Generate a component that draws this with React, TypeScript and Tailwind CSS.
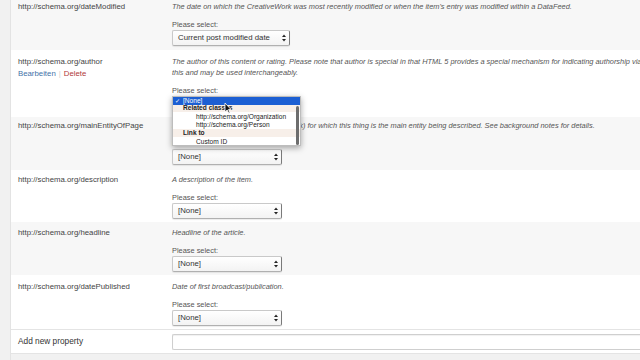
import React from "react";

const font = "font-['Liberation_Sans',Arial,sans-serif]";

function Arrows() {
  return (
    <svg width="4" height="8" viewBox="0 0 4 8" className="shrink-0">
      <path d="M0 3 L2 0.5 L4 3 Z" fill="#222" />
      <path d="M0 5 L2 7.5 L4 5 Z" fill="#222" />
    </svg>
  );
}

function Select({ value, width }: { value: string; width: string }) {
  return (
    <div
      className={`${width} h-[16px] flex items-center justify-between pl-[5px] pr-[3px] bg-gradient-to-b from-white to-[#f3f3f3] border border-[#c9c9c9] border-r-[#7a7a7a] border-b-[#b0b0b0] rounded-[2px] shadow-[0_1px_1px_rgba(0,0,0,0.08)]`}
    >
      <span className="text-[7.8px] text-[#333] leading-none">{value}</span>
      <Arrows />
    </div>
  );
}

type RowProps = {
  label: string;
  desc: string[];
  value: string;
  selWidth?: string;
  bg: string;
  h: string;
  pt?: string;
  actions?: boolean;
};

function Row({ label, desc, value, selWidth = "w-[110px]", bg, h, pt = "pt-[4px]", actions }: RowProps) {
  return (
    <div className={`flex ${bg} ${h} ${pt} overflow-hidden`}>
      <div className="w-[161px] shrink-0 pl-[7px]">
        <div className="text-[7.8px] leading-[11px] text-[#444] whitespace-nowrap">{label}</div>
        {actions && (
          <div className="text-[7.8px] leading-[11px] mt-[1px] whitespace-nowrap">
            <span className="text-[#3f72a8]">Bearbeiten</span>
            <span className="text-[#d0d0d0] mx-[3px]">|</span>
            <span className="text-[#b03a3a]">Delete</span>
          </div>
        )}
      </div>
      <div className="flex-1 min-w-0">
        {desc.map((d, i) => (
          <div key={i} className="text-[7.4px] leading-[11px] italic text-[#555] whitespace-nowrap">
            {d}
          </div>
        ))}
        <div className="text-[7.4px] leading-[11px] text-[#555] mt-[7px]">Please select:</div>
        <Select value={value} width={selWidth} />
      </div>
    </div>
  );
}

function Dropdown() {
  return (
    <div className="absolute left-[161px] top-[96px] w-[129px] h-[50px] bg-white border border-[#bdbdbd] shadow-[0_2px_6px_rgba(0,0,0,0.35)] overflow-hidden text-[6.6px] leading-none text-[#222]">
      <div className="h-[8px] bg-[#1c5fd3] text-white flex items-center pl-[2px]">
        <span className="w-[8px] text-[6px]">✓</span>
        <span>[None]</span>
      </div>
      <div className="h-[7px] bg-[#f7efe9] flex items-center pl-[10px] font-bold">Related classes</div>
      <div className="h-[10px] flex items-end pb-[1px] pl-[23px]">http://schema.org/Organization</div>
      <div className="h-[7px] flex items-center pl-[23px]">http://schema.org/Person</div>
      <div className="h-[8px] bg-[#f7efe9] flex items-center pl-[10px] font-bold">Link to</div>
      <div className="h-[10px] flex items-center pl-[23px]">Custom ID</div>
      <div className="absolute right-[1px] top-[9px] w-[3px] h-[39px] rounded-full bg-[#6d6d6d]" />
    </div>
  );
}

function Cursor() {
  return (
    <svg width="8" height="12" viewBox="0 0 8 12" className="absolute left-[213px] top-[102px]">
      <path d="M1 1 L1 10 L3.2 8 L4.8 11.2 L6 10.6 L4.5 7.5 L7 7.5 Z" fill="#111" stroke="#fff" strokeWidth="0.8" />
    </svg>
  );
}

export default function App() {
  return (
    <div className={`w-[640px] h-[360px] overflow-hidden bg-[#f1f1f1] flex ${font}`}>
      <div className="w-[11px] shrink-0 bg-[#f1f1f1] border-r border-[#e3e3e3]" />
      <div className="flex-1 relative">
        <Row
          label="http://schema.org/dateModified"
          desc={["The date on which the CreativeWork was most recently modified or when the item's entry was modified within a DataFeed."]}
          value="Current post modified date"
          selWidth="w-[118px]"
          bg="bg-[#f7f7f7]"
          h="h-[50px]"
          pt="pt-[1px]"
        />
        <Row
          label="http://schema.org/author"
          desc={[
            "The author of this content or rating. Please note that author is special in that HTML 5 provides a special mechanism for indicating authorship via the rel tag. That is equivalent to",
            "this and may be used interchangeably.",
          ]}
          value="[None]"
          bg="bg-white"
          h="h-[67px]"
          pt="pt-[6px]"
          actions
        />
        <Row
          label="http://schema.org/mainEntityOfPage"
          desc={["Indicates a page (or other CreativeWork) for which this thing is the main entity being described. See background notes for details."]}
          value="[None]"
          bg="bg-[#f7f7f7]"
          h="h-[53px]"
          pt="pt-[3px]"
        />
        <Row
          label="http://schema.org/description"
          desc={["A description of the item."]}
          value="[None]"
          bg="bg-white"
          h="h-[52px]"
        />
        <Row
          label="http://schema.org/headline"
          desc={["Headline of the article."]}
          value="[None]"
          bg="bg-[#f7f7f7]"
          h="h-[53px]"
          pt="pt-[5px]"
        />
        <Row
          label="http://schema.org/datePublished"
          desc={["Date of first broadcast/publication."]}
          value="[None]"
          bg="bg-white"
          h="h-[54px]"
          pt="pt-[6px]"
        />
        <div className="flex items-center h-[25px] bg-white border-y border-[#e4e4e4]">
          <div className="w-[161px] shrink-0 pl-[7px] text-[8.3px] text-[#333]">Add new property</div>
          <div className="flex-1 h-[16px] bg-white border border-[#cfcfcf] border-r-0 rounded-l-[2px] shadow-[inset_0_1px_1px_rgba(0,0,0,0.06)]" />
        </div>
        <Dropdown />
        <Cursor />
      </div>
    </div>
  );
}
